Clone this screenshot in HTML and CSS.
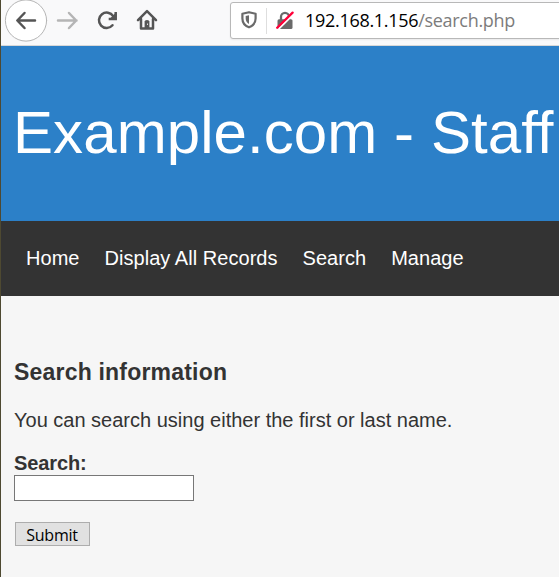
FILE: index.html
```html
<!DOCTYPE html>
<html lang="en">
<head>
<meta charset="utf-8">
<title>Example.com - Staff Details</title>
<link rel="stylesheet" href="styles.css">
</head>
<body>
<div class="window">
  <div class="toolbar">
    <svg class="tools" width="180" height="45" viewBox="0 0 180 45" fill="none" stroke-width="2.5" stroke-linecap="round" stroke-linejoin="round">
      <circle cx="26" cy="20.500" r="20.600" fill="#fff" stroke="#b5b5b5" stroke-width="1"/>
      <path d="M35 20.500H17.500M24.500 13l-7.200 7.500L24.500 28" stroke="#555"/>
      <path d="M58 20.500h18.500M69 13l7.200 7.500-7.200 7.500" stroke="#b5b5b5"/>
      <path d="M113.200 16.200A7.700 7.700 0 1 0 112.500 25.300" stroke="#555"/>
      <path d="M115.700 12v7h-7" stroke="#555" stroke-linecap="butt" stroke-linejoin="miter"/>
      <path d="M109 19.500h7.500V12z" fill="#555"/>
      <path d="M138 20.200l9-9 9 9M141 19v9.500h12V19" stroke="#555"/>
      <path d="M144.600 29v-7.500q0-1.600 2.400-1.600t2.400 1.600V29z" fill="#555"/>
      <path d="M147.500 23.500v1.500" stroke="#ddd" stroke-width="1" stroke-linecap="butt"/>
    </svg>
    <div class="address">
      <svg class="shield" width="16" height="18" viewBox="0 0 16 18">
        <path d="M8 1.200L14.600 2.800V7.500c0 4-2.300 7.200-6.600 8.800C3.700 14.700 1.400 11.500 1.400 7.500V2.800z" fill="none" stroke="#6a6a6a" stroke-width="2.200" stroke-linejoin="round"/>
        <path d="M8 4.200v8.900c-2-1.200-3.300-2.900-3.300-5.600V5z" fill="#6a6a6a"/>
      </svg>
      <span class="divider"></span>
      <svg class="lock" width="18" height="19" viewBox="0 0 18 19">
        <path d="M5 9V5.800a4 4 0 0 1 8 0V9" fill="none" stroke="#6a6a6a" stroke-width="2.300"/>
        <rect x="1.500" y="8.300" width="15" height="9.700" rx="1.500" fill="#6a6a6a"/>
        <path d="M2.500 18L18 2.500" stroke="#fff" stroke-width="2"/>
        <path d="M1.200 16.800L16.600 1.600" stroke="#ff0039" stroke-width="2.300" stroke-linecap="round"/>
      </svg>
      <span class="url">192.168.1.156<span class="path">/search.php</span></span>
    </div>
  </div>
  <header class="banner"><h1>Example.com - Staff</h1></header>
  <nav class="menu"><a>Home</a><a>Display All Records</a><a>Search</a><a>Manage</a></nav>
  <main class="content">
    <h2>Search information</h2>
    <p>You can search using either the first or last name.</p>
    <form>
      <label for="search">Search:</label>
      <input id="search" type="text">
      <button type="button">Submit</button>
    </form>
  </main>
</div>
</body>
</html>
```
FILE: styles.css
```css
* { box-sizing: border-box; }
body { margin: 0; overflow: hidden; background: #f6f6f6; font-family: "Liberation Sans", Arial, sans-serif; color: #333; }
.window { height: 577px; border-left: 1px solid #4e4931; overflow: hidden; }
.toolbar { display: flex; height: 46px; background: #f9f9fa; border-bottom: 1px solid #d8d8d8; }
.tools { flex: none; margin-left: -1px; }
.address { display: flex; flex: none; align-items: center; width: 340px; height: 37px; margin: 2px 0 0 50px; border: 1px solid #b8b8b8; border-radius: 3px; background: #fff; padding-left: 10px; box-shadow: 0 1px 2px #0001; }
.shield { margin-bottom: 2px; }
.divider { width: 1px; height: 26px; margin: 0 9px 0 9px; background: #dedede; }
.lock { margin-bottom: 1px; }
.url { margin: -2px 0 0 11px; font: 18px/24px "Open Sans", "Noto Sans", sans-serif; color: #000; white-space: nowrap; letter-spacing: -0.3px; }
.path { color: #7c7c7c; }
.banner { height: 175px; padding: 52px 0 0 12px; background: #2c80c8; color: #fff; }
h1 { margin: 0; font-size: 60px; line-height: 70px; font-weight: 400; white-space: nowrap; letter-spacing: 0.08px; }
.menu { display: flex; gap: 25px; align-items: center; height: 75px; padding-left: 25px; background: #333; color: #fff; font-size: 20px; letter-spacing: 0.04px; }
.content { padding: 62px 0 0 13px; font-size: 20px; line-height: 24px; }
h2 { margin: 0; font-size: 23px; line-height: 28px; letter-spacing: 0.2px; }
p { margin: 22px 0 0; }
form { display: flex; flex-direction: column; align-items: flex-start; margin-top: 19px; }
label { font-weight: 700; letter-spacing: -0.1px; }
input { width: 180px; height: 26px; padding: 2px; border: 1px solid #777; background: #fff; }
button { width: 75px; height: 24px; margin: 21px 0 0 1px; padding: 2px 1px 0 0; border: 1px solid #adadad; background: #e1e1e1; color: #000; font: 16px/20px "Open Sans", "Noto Sans", sans-serif; letter-spacing: -0.2px; }
```
